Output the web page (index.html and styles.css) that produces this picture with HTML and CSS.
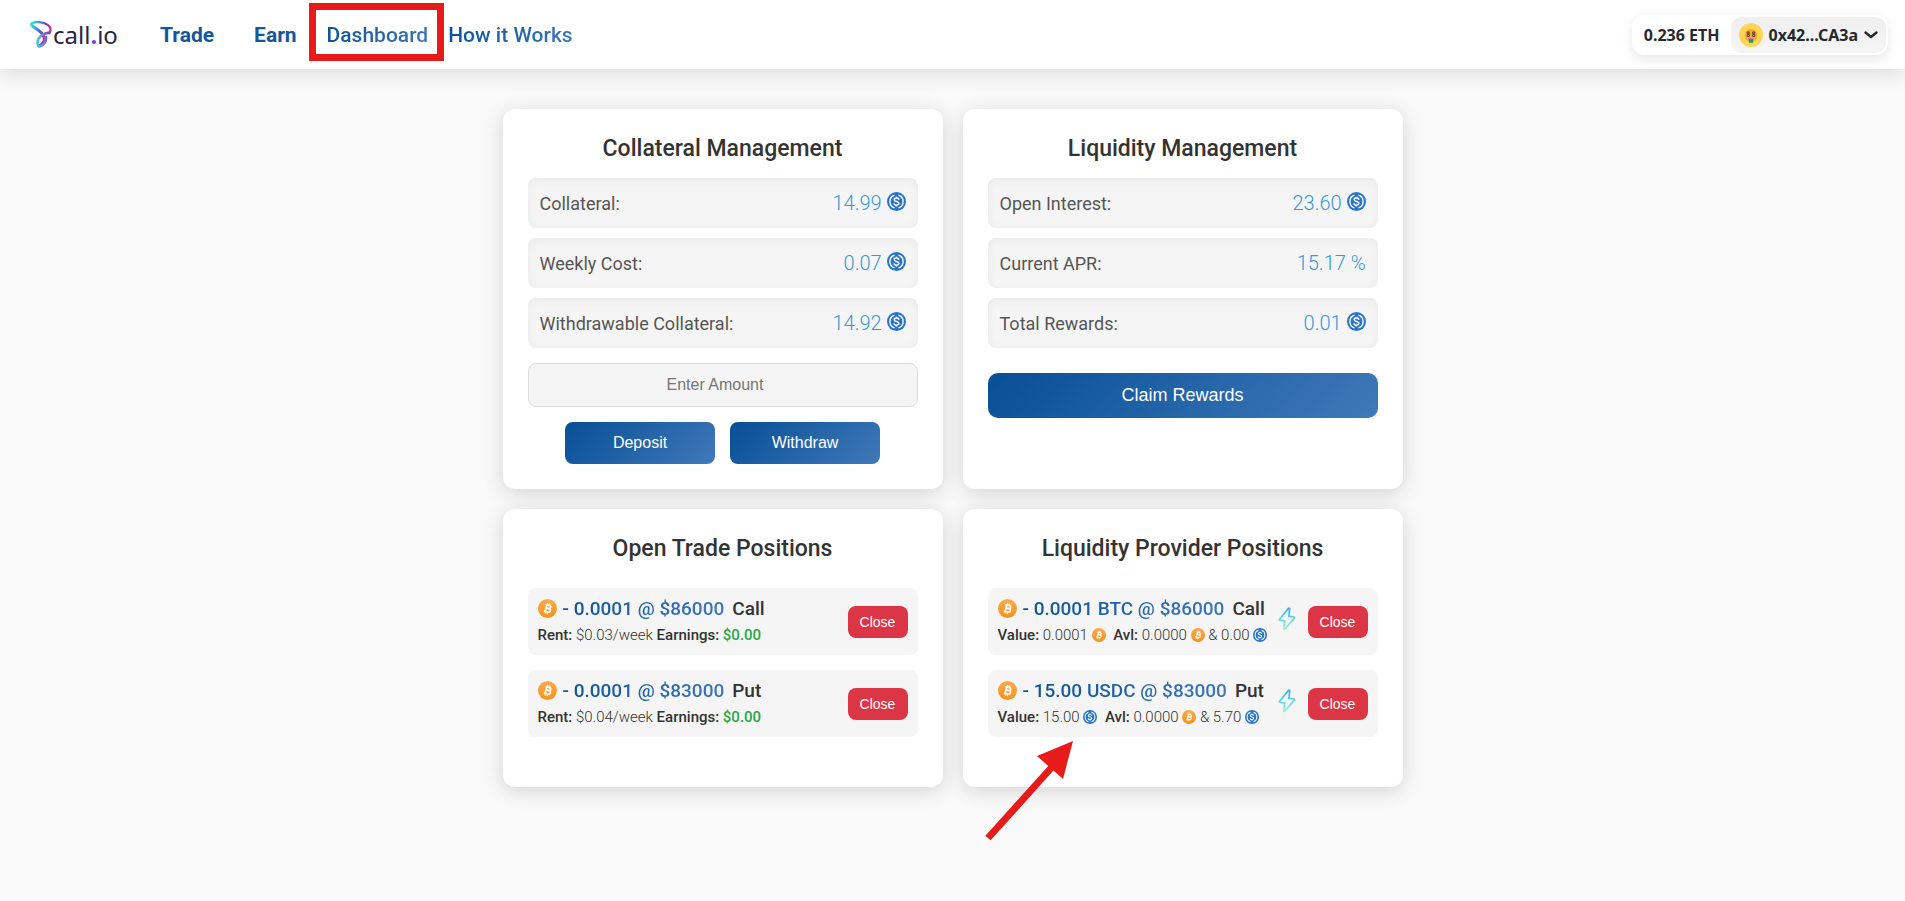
FILE: index.html
```html
<!DOCTYPE html>
<html lang="en">
<head>
<meta charset="utf-8">
<meta name="viewport" content="width=device-width, initial-scale=1">
<title>call.io - Dashboard</title>
<link rel="stylesheet" href="styles.css">
</head>
<body>
<svg class="sprite" aria-hidden="true">
  <defs>
    <linearGradient id="btc-fill" x1="0" y1="0" x2="0" y2="1">
      <stop offset="0" stop-color="#f9aa4b"/><stop offset="1" stop-color="#f7931a"/>
    </linearGradient>
    <linearGradient id="bolt-stroke" x1="0" y1="0" x2="0" y2="1">
      <stop offset="0" stop-color="#2fb4f8"/><stop offset="1" stop-color="#9df8d0"/>
    </linearGradient>
    <linearGradient id="logo-top" x1="0" y1="0" x2="1" y2="0">
      <stop offset="0" stop-color="#2fe6d8"/><stop offset=".45" stop-color="#3f8fe8"/><stop offset=".75" stop-color="#7b3fb5"/><stop offset="1" stop-color="#d8328a"/>
    </linearGradient>
    <linearGradient id="logo-low" x1="0" y1="0" x2="1" y2="0">
      <stop offset="0" stop-color="#45c8f5"/><stop offset="1" stop-color="#7d45c0"/>
    </linearGradient>
  </defs>
  <symbol id="usdc" viewBox="0 0 32 32">
    <circle cx="16" cy="16" r="16" fill="#2775ca"/>
    <g fill="none" stroke="#fff" stroke-width="2.3">
      <path d="M12.6 5.2a11.4 11.4 0 0 0 0 21.6M19.4 5.2a11.4 11.4 0 0 1 0 21.6"/>
      <path d="M20 13.2c-.2-2-1.700-3-4-3s-3.900 1.100-3.900 2.900c0 4.200 8 1.600 8 5.900 0 1.900-1.700 3-4.100 3s-4.100-1.100-4.200-3.200M16 7.800v2.400M16 22v2.400"/>
    </g>
  </symbol>
  <symbol id="btc" viewBox="0 0 32 32">
    <circle cx="16" cy="16" r="16" fill="url(#btc-fill)"/>
    <g fill="none" stroke="#fff" stroke-width="2.800" transform="rotate(14 16 16)">
      <path d="M11 10.200h6.300c4.400 0 4.400 5.300 0 5.300h-4h4.800c4.700 0 4.700 6 0 6H11M13.400 10.200v11.300"/>
      <path stroke-width="2" d="M14 6.600v3M17.800 6.600v3M14 22v3.200M17.800 22v3.200"/>
    </g>
  </symbol>
  <symbol id="bolt" viewBox="0 0 18 24">
    <path d="M10.300 1.500 1.600 12.200q-.6 1.200.8 1.300l4.300.4-.9 7.800q.3 1.300 1.400.3l9-10.900q.6-1.100-.8-1.300l-4.600-.5.900-7.300q-.3-1.400-1.400-.5z" fill="none" stroke="url(#bolt-stroke)" stroke-width="1.800" stroke-linejoin="round"/>
  </symbol>
</svg>

<header class="topbar">
  <a class="logo" href="#" aria-label="call.io home">
    <svg class="logo-mark" viewBox="0 0 22 27" aria-hidden="true">
      <path d="M1.200 3.200C3 .500 10 .600 15 2.500c5.500 2.200 6.800 6 4.200 9.500" fill="none" stroke="url(#logo-top)" stroke-width="2.400" stroke-linecap="round"/>
      <path d="M1.200 3.200C3 7.500 13 9.500 14.200 17c.6 4-2 6.500-5 8" fill="none" stroke="url(#logo-top)" stroke-width="3" stroke-linecap="round"/>
      <path d="M19.200 12c-3-.5-11 2.500-11.700 9-.3 3 .8 4.600 2.600 4.200 3-1 6.400-4 6-9.200" fill="none" stroke="url(#logo-low)" stroke-width="2.600" stroke-linecap="round"/>
    </svg>
    <span class="logo-text">call<span class="logo-dot">.</span>io</span>
  </a>
  <nav class="nav">
    <a class="nav-link nav-main" href="#">Trade</a>
    <a class="nav-link nav-main" href="#">Earn</a>
    <a class="nav-link nav-marked" href="#"><span class="grad">Dashboard</span></a>
    <a class="nav-link" href="#"><span class="grad">How it Works</span></a>
  </nav>
  <div class="wallet">
    <span class="balance">0.236 ETH</span>
    <button class="account" type="button">
      <svg class="avatar" viewBox="0 0 24 24" aria-hidden="true">
        <circle cx="12" cy="12" r="12" fill="#ffd558"/>
        <circle cx="12" cy="12.500" r="6.500" fill="#f9a833"/>
        <g fill="none" stroke="#5c4524" stroke-width="1.100">
          <circle cx="9.300" cy="10" r="1.100"/><circle cx="9.300" cy="12.400" r="1.100"/>
          <circle cx="14.700" cy="10" r="1.100"/><circle cx="14.700" cy="12.400" r="1.100"/>
        </g>
        <path d="M8.500 14.800h7q-.5 2.500-3.500 2.500t-3.500-2.500z" fill="#d97fa5"/>
        <rect x="9.800" y="16" width="4.400" height="3.800" rx=".6" fill="#16a45c"/>
      </svg>
      <span>0x42...CA3a</span>
      <svg class="chevron" viewBox="0 0 14 8" aria-hidden="true"><path d="M1.500 1.500 7 6l5.500-4.500" fill="none" stroke="#25292e" stroke-width="2.400" stroke-linecap="round" stroke-linejoin="round"/></svg>
    </button>
  </div>
</header>

<main class="dashboard">
  <section class="card">
    <h2 class="title">Collateral Management</h2>
    <dl class="stats">
      <div class="stat"><dt>Collateral:</dt><dd>14.99 <svg class="coin"><use href="#usdc"/></svg></dd></div>
      <div class="stat"><dt>Weekly Cost:</dt><dd>0.07 <svg class="coin"><use href="#usdc"/></svg></dd></div>
      <div class="stat"><dt>Withdrawable Collateral:</dt><dd>14.92 <svg class="coin"><use href="#usdc"/></svg></dd></div>
    </dl>
    <input class="amount" type="number" placeholder="Enter Amount" aria-label="Enter Amount">
    <div class="actions">
      <button class="btn" type="button">Deposit</button>
      <button class="btn" type="button">Withdraw</button>
    </div>
  </section>

  <section class="card">
    <h2 class="title">Liquidity Management</h2>
    <dl class="stats">
      <div class="stat"><dt>Open Interest:</dt><dd>23.60 <svg class="coin"><use href="#usdc"/></svg></dd></div>
      <div class="stat"><dt>Current APR:</dt><dd>15.17 %</dd></div>
      <div class="stat"><dt>Total Rewards:</dt><dd>0.01 <svg class="coin"><use href="#usdc"/></svg></dd></div>
    </dl>
    <button class="btn btn-wide" type="button">Claim Rewards</button>
  </section>

  <section class="card">
    <h2 class="title">Open Trade Positions</h2>
    <ul class="positions">
      <li class="position">
        <div class="info">
          <p class="headline"><svg class="coin"><use href="#btc"/></svg><span class="grad">- 0.0001 @ $86000</span><span class="kind">Call</span></p>
          <p class="detail"><b>Rent:</b> $0.03/week <b>Earnings:</b> <b class="gain">$0.00</b></p>
        </div>
        <button class="close" type="button">Close</button>
      </li>
      <li class="position">
        <div class="info">
          <p class="headline"><svg class="coin"><use href="#btc"/></svg><span class="grad">- 0.0001 @ $83000</span><span class="kind">Put</span></p>
          <p class="detail"><b>Rent:</b> $0.04/week <b>Earnings:</b> <b class="gain">$0.00</b></p>
        </div>
        <button class="close" type="button">Close</button>
      </li>
    </ul>
  </section>

  <section class="card card-marked">
    <h2 class="title">Liquidity Provider Positions</h2>
    <ul class="positions">
      <li class="position">
        <div class="info">
          <p class="headline"><svg class="coin"><use href="#btc"/></svg><span class="grad">- 0.0001 BTC @ $86000</span><span class="kind">Call</span></p>
          <p class="detail"><b>Value:</b> 0.0001 <svg class="coin-sm"><use href="#btc"/></svg> <b class="avl">Avl:</b> 0.0000 <svg class="coin-sm"><use href="#btc"/></svg> &amp; 0.00 <svg class="coin-sm"><use href="#usdc"/></svg></p>
        </div>
        <svg class="bolt" aria-hidden="true"><use href="#bolt"/></svg>
        <button class="close" type="button">Close</button>
      </li>
      <li class="position">
        <div class="info">
          <p class="headline"><svg class="coin"><use href="#btc"/></svg><span class="grad">- 15.00 USDC @ $83000</span><span class="kind">Put</span></p>
          <p class="detail"><b>Value:</b> 15.00 <svg class="coin-sm"><use href="#usdc"/></svg> <b class="avl">Avl:</b> 0.0000 <svg class="coin-sm"><use href="#btc"/></svg> &amp; 5.70 <svg class="coin-sm"><use href="#usdc"/></svg></p>
        </div>
        <svg class="bolt" aria-hidden="true"><use href="#bolt"/></svg>
        <button class="close" type="button">Close</button>
      </li>
    </ul>
    <svg class="arrow" viewBox="0 0 90 102" aria-hidden="true">
      <path d="M3 97 67 26" stroke="#e81b1b" stroke-width="7"/>
      <path d="M88 0 52 15 78 38z" fill="#e81b1b"/>
    </svg>
  </section>
</main>
</body>
</html>
```
FILE: styles.css
```css
* {
  box-sizing: border-box;
}

body {
  margin: 0;
  min-height: 100vh;
  background: #f9f9f9;
  color: #333;
  font-family: Roboto, "Liberation Sans", sans-serif;
}

h2, p, dl, dd, ul {
  margin: 0;
  padding: 0;
}

.sprite {
  position: absolute;
  width: 0;
  height: 0;
}

.grad {
  background: linear-gradient(135deg, #074f96, #4079b9);
  background-clip: text;
  -webkit-background-clip: text;
  color: transparent;
}

/* Top bar */
.topbar {
  display: flex;
  align-items: center;
  height: 69px;
  padding: 0 17px 0 30px;
  background: #fff;
  box-shadow: 0 4px 20px rgba(0, 0, 0, 0.12);
}

.logo {
  display: flex;
  align-items: center;
  gap: 1px;
  width: 120px;
  text-decoration: none;
}

.logo-mark {
  width: 22px;
  height: 27px;
}

.logo-text {
  color: #25264a;
  font: 24px/32px "Noto Sans", sans-serif;
}

.logo-dot {
  color: #7a3fd0;
  font-weight: 700;
}

.nav {
  display: flex;
  gap: 20px;
  flex: 1;
}

.nav-link {
  color: #14569c;
  font-size: 21px;
  font-weight: 500;
  line-height: 28px;
  text-decoration: none;
  white-space: nowrap;
}

.nav-main {
  padding: 0 10px;
  font-weight: 700;
}

.nav-marked {
  position: relative;
}

.nav-marked::after {
  content: "";
  position: absolute;
  inset: -18px -16px -12px -18px;
  border: 7px solid #e81b1b;
}

.wallet {
  display: flex;
  align-items: center;
  gap: 11px;
  padding: 2px 2px 2px 12px;
  border-radius: 12px;
  background: #fff;
  color: #25292e;
  font: 700 16px/24px "Noto Sans", sans-serif;
  box-shadow: 0 4px 12px rgba(0, 0, 0, 0.1);
}

.account {
  display: flex;
  align-items: center;
  gap: 6px;
  padding: 6px 8px;
  border: 0;
  border-radius: 10px;
  background: linear-gradient(#efefef, #f5f5f5);
  color: inherit;
  font: inherit;
}

.avatar {
  width: 24px;
  height: 24px;
}

.chevron {
  width: 14px;
  height: 8px;
}

/* Cards */
.dashboard {
  display: grid;
  grid-template-columns: repeat(2, minmax(0, 440px));
  justify-content: center;
  gap: 20px;
  padding: 40px 20px;
}

.card {
  padding: 25px;
  border-radius: 12px;
  background: #fff;
  box-shadow: 0 4px 20px rgba(0, 0, 0, 0.15);
}

.card-marked {
  position: relative;
}

.title {
  margin-bottom: 15px;
  font-size: 23px;
  font-weight: 500;
  line-height: 29px;
  text-align: center;
}

.stats {
  display: grid;
  gap: 10px;
}

.stat {
  display: flex;
  align-items: center;
  justify-content: space-between;
  height: 50px;
  padding: 0 12px;
  border-radius: 8px;
  background: #f5f5f5;
  box-shadow: inset 0 2px 10px rgba(0, 0, 0, 0.05);
  font-size: 18px;
}

.stat dt {
  color: #555;
}

.stat dd {
  color: #3498db;
  font-size: 20px;
  font-weight: 300;
}

.coin {
  width: 19px;
  height: 19px;
}

.stat .coin {
  vertical-align: -1px;
}

.amount {
  width: 100%;
  height: 44px;
  margin-top: 15px;
  padding: 0 12px;
  border: 1px solid #ddd;
  border-radius: 8px;
  background: #f5f5f5;
  font: 16px "Liberation Sans", sans-serif;
  text-align: center;
}

.actions {
  display: flex;
  justify-content: center;
  gap: 15px;
  margin-top: 15px;
}

.btn {
  width: 150px;
  height: 42px;
  border: 0;
  border-radius: 8px;
  background: linear-gradient(135deg, #074f96, #4079b9);
  color: #fff;
  font: 16px "Liberation Sans", sans-serif;
}

.btn-wide {
  width: 100%;
  height: 45px;
  margin-top: 25px;
  border-radius: 10px;
  font-size: 18px;
}

/* Positions */
.positions {
  display: grid;
  gap: 15px;
  padding: 10px 0 25px;
  list-style: none;
}

.position {
  display: flex;
  align-items: center;
  height: 67px;
  padding: 0 10px;
  border-radius: 8px;
  background: #f5f5f5;
}

.info {
  flex: 1;
  white-space: nowrap;
}

.headline {
  display: flex;
  align-items: center;
  font-size: 19px;
  font-weight: 500;
  line-height: 27px;
}

.headline .coin {
  margin-right: 6px;
}

.kind {
  margin-left: 8px;
}

.detail {
  font-size: 15px;
  font-weight: 300;
  line-height: 26px;
}

.detail b {
  font-weight: 500;
}

.detail .gain {
  color: #28a745;
}

.detail .avl {
  margin-left: 4px;
}

.coin-sm {
  width: 14px;
  height: 14px;
  vertical-align: -2px;
}

.bolt {
  width: 18px;
  height: 24px;
  margin: 0 12px 5px 8px;
}

.close {
  width: 60px;
  height: 32px;
  padding: 0;
  border: 0;
  border-radius: 8px;
  background: #dc3545;
  color: #fff;
  font: 14px "Liberation Sans", sans-serif;
}

.arrow {
  position: absolute;
  top: 232px;
  left: 22px;
  width: 90px;
  height: 102px;
}
```
